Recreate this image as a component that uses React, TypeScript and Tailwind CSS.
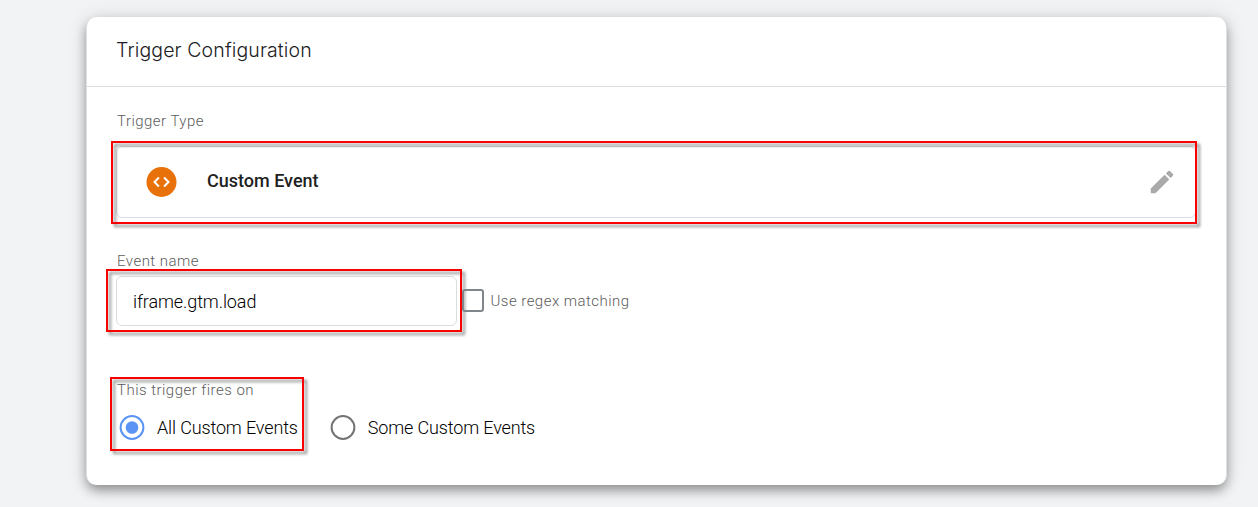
import type { ReactNode } from "react";

function Highlight({ className }: { className: string }) {
  return (
    <div
      className={`pointer-events-none absolute border-2 border-[#fb0000] drop-shadow-[3px_3px_1.5px_rgba(0,0,0,0.45)] ${className}`}
    />
  );
}

function Label({ children }: { children: ReactNode }) {
  return (
    <div className="h-5 whitespace-nowrap text-[15px] leading-5 font-light tracking-[0.47px] text-[#5c5c5c]">
      {children}
    </div>
  );
}

function Radio({ checked, label }: { checked?: boolean; label: string }) {
  return (
    <label className="flex h-6 items-center gap-3">
      <svg width="26" height="26" viewBox="0 0 26 26" className="shrink-0" fill="none">
        <circle cx="13" cy="12.5" r="11.4" stroke={checked ? "#5b94f5" : "#757575"} strokeWidth="2" />
        {checked && <circle cx="13" cy="12.5" r="6.3" fill="#5b94f5" />}
      </svg>
      <span className="whitespace-nowrap text-[18px] leading-6 font-light tracking-[-0.14px] text-black">{label}</span>
    </label>
  );
}

export default function App() {
  return (
    <div className="h-[507px] w-[1258px] overflow-hidden bg-[#f1f3f4] pt-[17px] pl-[86px] font-['Roboto',sans-serif]">
      <section className="h-[468px] w-[1141px] rounded-[10px] border-x border-[#dfe0e1] bg-white shadow-[0_6px_12px_-1px_rgba(0,0,0,0.38),0_1px_20px_rgba(0,0,0,0.12)]">
        <header className="flex h-[70px] items-center border-b border-[#dadce0] pb-[4px] pl-[29px]">
          <h1 className="whitespace-nowrap font-['Inter',sans-serif] text-[19.5px] leading-7 font-light tracking-[0.12px] text-[#202124]">
            Trigger Configuration
          </h1>
        </header>
        <div className="flex flex-col pl-[30px]">
          <div className="mt-6">
            <Label>Trigger Type</Label>
          </div>
          <div className="relative -ml-px mt-[15px] flex h-[72px] w-[1080px] items-center rounded-md border border-[#dadce0] pr-[18px] pl-[29px]">
            <svg width="31" height="30" viewBox="0 0 31 30" fill="none">
              <circle cx="15.5" cy="15" r="15" fill="#e8710a" />
              <path d="M12.9 10.5 8.5 15l4.4 4.5M18.1 10.5 22.5 15l-4.4 4.5" stroke="#fff" strokeWidth="2" />
            </svg>
            <span className="mb-[2px] ml-[30px] text-[18px] leading-6 font-medium text-[#212121]">Custom Event</span>
            <svg className="ml-auto" width="30" height="30" viewBox="0 0 24 24" fill="#aaaaaa">
              <path d="M3 17.25V21h3.75L17.81 9.94l-3.75-3.75L3 17.25zM20.71 7.04a1 1 0 0 0 0-1.41l-2.34-2.34a1 1 0 0 0-1.41 0l-1.83 1.83 3.75 3.75 1.83-1.83z" />
            </svg>
            <Highlight className="-top-[6px] -left-[6px] h-[83px] w-[1086px]" />
          </div>
          <div className="mt-[33px]">
            <Label>Event name</Label>
          </div>
          <div className="-ml-px mt-[5px] flex items-center">
            <div className="relative flex h-[50px] w-[341px] items-center rounded-md border border-[#dadce0] pl-4 text-[18px] leading-6 font-light tracking-[-0.1px] text-black">
              <span className="pt-px">iframe.gtm.load</span>
              <Highlight className="-top-[8px] -left-[11px] h-[63px] w-[356px]" />
            </div>
            <span className="relative mb-px ml-[5px] h-[23px] w-[22px] shrink-0 rounded-[3px] border-2 border-[#80868b]" />
            <span className="ml-[6.5px] whitespace-nowrap text-[15px] leading-5 font-light tracking-[0.47px] text-[#5c5c5c]">
              Use regex matching
            </span>
          </div>
          <div className="relative mt-[54px] w-[450px]">
            <Label>This trigger fires on</Label>
            <div className="mt-[16px] ml-[2px] flex gap-[32px]">
              <Radio checked label="All Custom Events" />
              <Radio label="Some Custom Events" />
            </div>
            <Highlight className="-top-[3px] -left-[7px] h-[74px] w-[194px]" />
          </div>
        </div>
      </section>
    </div>
  );
}
